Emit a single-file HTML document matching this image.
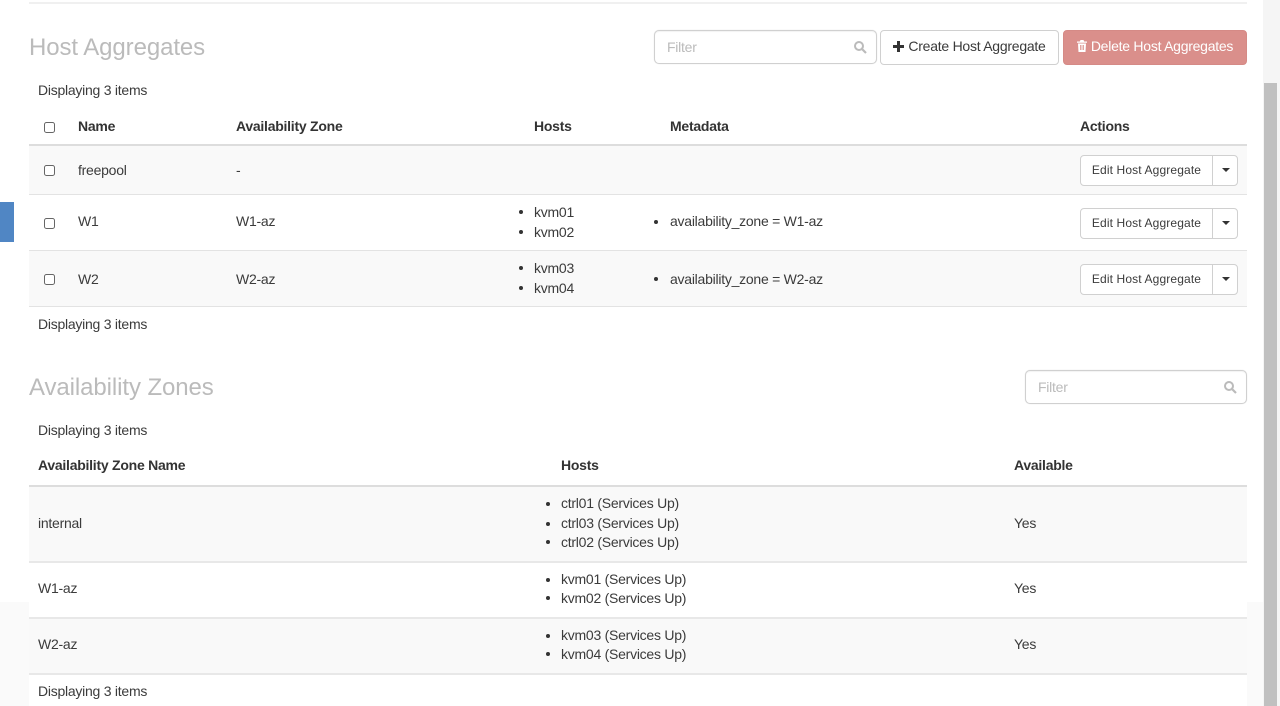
<!DOCTYPE html>
<html><head><meta charset="utf-8"><style>
html,body{margin:0;padding:0;width:1280px;height:706px;overflow:hidden;background:#fff;font-family:"Liberation Sans",sans-serif;font-size:14px;color:#3b3b3b}
.a{position:absolute;white-space:nowrap}
.t{position:absolute;white-space:nowrap;line-height:20px;height:20px;letter-spacing:-.25px;filter:blur(.25px)}
.b{font-weight:bold;color:#333}
.r{position:absolute;left:29px;width:1218px}
.h{position:absolute;left:29px;font-size:24px;color:#bbb;line-height:30px;white-space:nowrap;letter-spacing:-.09px;filter:blur(.25px)}
.f{position:absolute;box-sizing:border-box;border:1px solid #d0d0d0;border-radius:5px;height:34px;background:#fff;box-shadow:inset 0 1px 1px rgba(0,0,0,.05),0 0 1px rgba(0,0,0,.12)}
.f span{position:absolute;left:12px;top:6px;line-height:20px;color:#bbb;letter-spacing:-.25px;filter:blur(.25px)}
.f svg{position:absolute;right:9px;top:9px}
.btn{position:absolute;box-sizing:border-box;border:1px solid #d0d0d0;border-radius:4px;background:#fff;text-align:center;white-space:nowrap}
.e{left:1080px;width:133px;height:31px;border-radius:4px 0 0 4px;font-size:12px;line-height:29px;color:#3b3b3b;letter-spacing:.13px}
.c{left:1212px;width:26px;height:31px;border-radius:0 4px 4px 0}
.c i{position:absolute;left:9px;top:12px;border:4px solid transparent;border-top-color:#333;border-bottom:0}
.k{position:absolute;left:44px;width:9px;height:9px;border:1.5px solid #666;border-radius:2.5px;background:#fff}
.d{position:absolute;width:4px;height:4px;border-radius:50%;background:#333}
</style></head><body>
<div class="a" style="left:29px;top:2px;width:1218px;height:2px;background:#f0f0f0"></div>
<div class="a" style="left:0;top:602px;width:29px;height:104px;background:#fafafa"></div>
<div class="a" style="left:1247px;top:602px;width:16px;height:104px;background:#fafafa"></div>
<div class="a" style="left:0;top:202px;width:14px;height:40px;background:#5086c4"></div>
<div class="a" style="left:1263px;top:0;width:17px;height:706px;background:#f5f5f5"></div>
<div class="a" style="left:1264px;top:83px;width:13px;height:623px;background:#c0c0c0"></div>

<div class="h" style="top:33px">Host Aggregates</div>
<div class="f" style="left:654px;top:30px;width:223px"><span>Filter</span><svg width="14" height="14" viewBox="0 0 14 14"><circle cx="6" cy="6" r="4" fill="none" stroke="#bbb" stroke-width="2"/><path d="M9 9l4 4" stroke="#bbb" stroke-width="2.2"/></svg></div>
<div class="btn" style="left:880px;top:30px;width:179px;height:35px;line-height:31px;letter-spacing:-.25px"><svg width="11" height="11" viewBox="0 0 11 11" style="vertical-align:-1px;margin-right:4px"><path d="M4 0h3v4h4v3H7v4H4V7H0V4h4z" fill="#333"/></svg>Create Host Aggregate</div>
<div class="btn" style="left:1063px;top:30px;width:184px;height:35px;line-height:31px;background:#da8f8b;border-color:#d58a86;color:#fff;letter-spacing:-.25px"><svg width="10" height="12" viewBox="0 0 10 12" style="vertical-align:-1px;margin-right:4px"><path d="M3.5 0h3l.7 1.5H10v1.2H0V1.5h2.8zM1 3.5h8l-.5 8.5h-7zM3 5v5h.8V5zM4.6 5v5h.8V5zM6.2 5v5H7V5z" fill="#fff" fill-rule="evenodd"/></svg>Delete Host Aggregates</div>

<div class="t" style="left:38px;top:80px">Displaying 3 items</div>
<div class="k" style="top:122px"></div>
<div class="t b" style="left:78px;top:116px">Name</div>
<div class="t b" style="left:236px;top:116px">Availability Zone</div>
<div class="t b" style="left:534px;top:116px">Hosts</div>
<div class="t b" style="left:670px;top:116px">Metadata</div>
<div class="t b" style="left:1080px;top:116px">Actions</div>

<div class="r" style="top:144px;height:2px;background:#ddd"></div>
<div class="r" style="top:146px;height:48px;background:#f9f9f9"></div>
<div class="r" style="top:194px;height:1px;background:#e3e3e3"></div>
<div class="r" style="top:250px;height:1px;background:#e3e3e3"></div>
<div class="r" style="top:251px;height:55px;background:#f9f9f9"></div>
<div class="r" style="top:306px;height:1px;background:#e3e3e3"></div>

<div class="k" style="top:165px"></div>
<div class="t" style="left:78px;top:160px">freepool</div>
<div class="t" style="left:236px;top:160px">-</div>
<div class="btn e" style="top:155px">Edit Host Aggregate</div><div class="btn c" style="top:155px"><i></i></div>

<div class="k" style="top:218px"></div>
<div class="t" style="left:78px;top:211px">W1</div>
<div class="t" style="left:236px;top:211px">W1-az</div>
<div class="d" style="left:519px;top:210px"></div><div class="t" style="left:534px;top:202px">kvm01</div>
<div class="d" style="left:519px;top:230px"></div><div class="t" style="left:534px;top:222px">kvm02</div>
<div class="d" style="left:654px;top:220px"></div><div class="t" style="left:670px;top:211px">availability_zone = W1-az</div>
<div class="btn e" style="top:208px">Edit Host Aggregate</div><div class="btn c" style="top:208px"><i></i></div>

<div class="k" style="top:274px"></div>
<div class="t" style="left:78px;top:269px">W2</div>
<div class="t" style="left:236px;top:269px">W2-az</div>
<div class="d" style="left:519px;top:266px"></div><div class="t" style="left:534px;top:258px">kvm03</div>
<div class="d" style="left:519px;top:286px"></div><div class="t" style="left:534px;top:278px">kvm04</div>
<div class="d" style="left:654px;top:277px"></div><div class="t" style="left:670px;top:269px">availability_zone = W2-az</div>
<div class="btn e" style="top:264px">Edit Host Aggregate</div><div class="btn c" style="top:264px"><i></i></div>

<div class="t" style="left:38px;top:314px">Displaying 3 items</div>

<div class="h" style="top:373px">Availability Zones</div>
<div class="f" style="left:1025px;top:370px;width:222px"><span>Filter</span><svg width="14" height="14" viewBox="0 0 14 14"><circle cx="6" cy="6" r="4" fill="none" stroke="#bbb" stroke-width="2"/><path d="M9 9l4 4" stroke="#bbb" stroke-width="2.2"/></svg></div>
<div class="t" style="left:38px;top:420px">Displaying 3 items</div>
<div class="t b" style="left:38px;top:455px">Availability Zone Name</div>
<div class="t b" style="left:561px;top:455px">Hosts</div>
<div class="t b" style="left:1014px;top:455px">Available</div>

<div class="r" style="top:485px;height:2px;background:#ddd"></div>
<div class="r" style="top:487px;height:74px;background:#f9f9f9"></div>
<div class="r" style="top:561px;height:2px;background:#e8e8e8"></div>
<div class="r" style="top:617px;height:2px;background:#e8e8e8"></div>
<div class="r" style="top:619px;height:54px;background:#f9f9f9"></div>
<div class="r" style="top:673px;height:2px;background:#e8e8e8"></div>

<div class="t" style="left:38px;top:513px">internal</div>
<div class="d" style="left:546px;top:502px"></div><div class="t" style="left:561px;top:493px">ctrl01 (Services Up)</div>
<div class="d" style="left:546px;top:522px"></div><div class="t" style="left:561px;top:513px">ctrl03 (Services Up)</div>
<div class="d" style="left:546px;top:540px"></div><div class="t" style="left:561px;top:532px">ctrl02 (Services Up)</div>
<div class="t" style="left:1014px;top:513px">Yes</div>

<div class="t" style="left:38px;top:578px">W1-az</div>
<div class="d" style="left:546px;top:578px"></div><div class="t" style="left:561px;top:569px">kvm01 (Services Up)</div>
<div class="d" style="left:546px;top:596px"></div><div class="t" style="left:561px;top:588px">kvm02 (Services Up)</div>
<div class="t" style="left:1014px;top:578px">Yes</div>

<div class="t" style="left:38px;top:634px">W2-az</div>
<div class="d" style="left:546px;top:634px"></div><div class="t" style="left:561px;top:625px">kvm03 (Services Up)</div>
<div class="d" style="left:546px;top:652px"></div><div class="t" style="left:561px;top:644px">kvm04 (Services Up)</div>
<div class="t" style="left:1014px;top:634px">Yes</div>

<div class="t" style="left:38px;top:681px">Displaying 3 items</div>
</body></html>
